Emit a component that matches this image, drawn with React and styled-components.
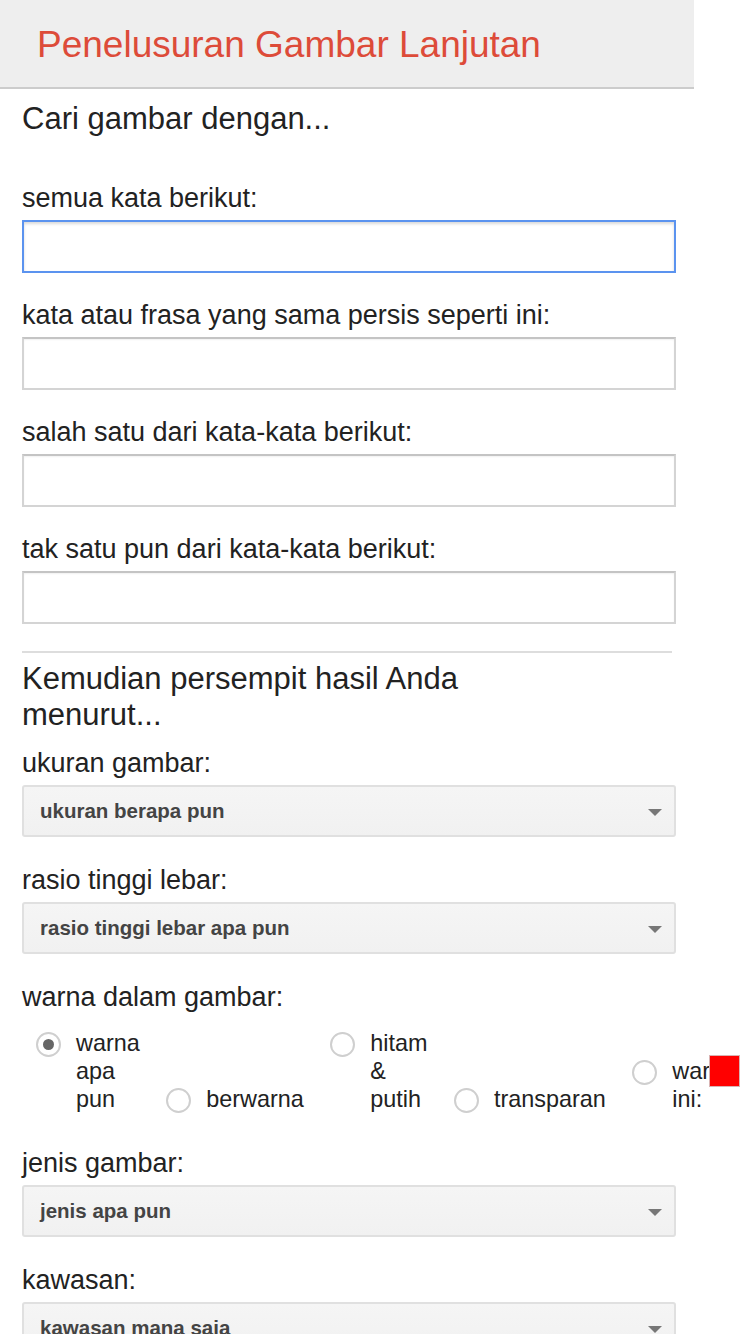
import React from "react";
import styled, { createGlobalStyle } from "styled-components";

const GlobalStyle = createGlobalStyle`
  html, body { margin: 0; padding: 0; background: #fff; }
  body { font-family: "Liberation Sans", Arial, sans-serif; color: #222; }
`;

const Page = styled.div`
  width: 694px;
`;

const Header = styled.header`
  box-sizing: border-box;
  height: 89px;
  padding: 23px 0 0 37px;
  background: #eeeeee;
  border-bottom: 2px solid #cccccc;
`;

const Title = styled.h1`
  margin: 0;
  font-size: 37px;
  line-height: 44px;
  font-weight: normal;
  color: #dd4b39;
`;

const Content = styled.main`
  padding: 12px 18px 0 22px;
`;

const SectionHeading = styled.h2`
  margin: 0 0 ${(p) => p.$after}px;
  max-width: ${(p) => p.$maxWidth || "none"};
  font-size: 31px;
  line-height: 36px;
  font-weight: normal;
  color: #222;
`;

const Field = styled.div`
  margin-bottom: ${(p) => p.$after ?? 27}px;
`;

const Label = styled.div`
  font-size: 27px;
  line-height: 31px;
  color: #222;
  margin-bottom: 6px;
`;

const TextInput = styled.div`
  box-sizing: border-box;
  height: 53px;
  width: 654px;
  background: #fff;
  border: 2px solid ${(p) => (p.$focused ? "#5b93ef" : "#d4d4d4")};
  border-top-color: ${(p) => (p.$focused ? "#5b93ef" : "#c4c4c4")};
  box-shadow: ${(p) =>
    p.$focused ? "inset 0 2px 3px rgba(0,0,0,0.15)" : "inset 0 1px 2px rgba(0,0,0,0.06)"};
`;

const Divider = styled.hr`
  margin: 2px 4px 8px 0;
  border: none;
  height: 2px;
  background: #dddddd;
`;

const Select = styled.div`
  box-sizing: border-box;
  height: 52px;
  width: 654px;
  display: flex;
  align-items: center;
  justify-content: space-between;
  padding: 0 12px 0 16px;
  background: linear-gradient(#f5f5f5, #f1f1f1);
  border: 2px solid #e0e0e0;
  border-radius: 3px;
  font-size: 20.5px;
  font-weight: bold;
  color: #444;
`;

const Caret = styled.span`
  width: 0;
  height: 0;
  border-left: 7px solid transparent;
  border-right: 7px solid transparent;
  border-top: 7px solid #777;
  margin-top: 2px;
`;

const RadioRow = styled.div`
  display: flex;
  align-items: flex-end;
  gap: 26.5px;
  margin-top: 16px;
  padding-left: 14px;
`;

const Option = styled.label`
  flex-shrink: 0;
  display: flex;
  align-items: flex-start;
  gap: 15px;
`;

const Radio = styled.span`
  box-sizing: border-box;
  flex-shrink: 0;
  width: 25px;
  height: 25px;
  margin-top: 3px;
  border-radius: 50%;
  border: 2px solid #cfcfcf;
  background: #fff;
  display: flex;
  align-items: center;
  justify-content: center;
  &::after {
    content: "";
    display: ${(p) => (p.$checked ? "block" : "none")};
    width: 11px;
    height: 11px;
    border-radius: 50%;
    background: #666;
  }
`;

const OptionText = styled.span`
  position: relative;
  width: min-content;
  font-size: 23.4px;
  line-height: 28px;
  color: #222;
`;

const Swatch = styled.span`
  position: absolute;
  left: 37px;
  top: -2px;
  width: 31px;
  height: 32px;
  box-sizing: border-box;
  background: #ff0000;
  border: 1px solid #d9b3b3;
`;

const colorOptions = [
  { text: "warna apa pun", checked: true },
  { text: "berwarna" },
  { text: "hitam & putih" },
  { text: "transparan" },
  { text: "warna ini:", swatch: true },
];

function SelectBox({ value }) {
  return (
    <Select>
      <span>{value}</span>
      <Caret />
    </Select>
  );
}

export default function App() {
  return (
    <>
      <GlobalStyle />
      <Page>
        <Header>
          <Title>Penelusuran Gambar Lanjutan</Title>
        </Header>
        <Content>
          <SectionHeading $after={46}>Cari gambar dengan...</SectionHeading>
          <Field>
            <Label>semua kata berikut:</Label>
            <TextInput $focused />
          </Field>
          <Field>
            <Label>kata atau frasa yang sama persis seperti ini:</Label>
            <TextInput />
          </Field>
          <Field>
            <Label>salah satu dari kata-kata berikut:</Label>
            <TextInput />
          </Field>
          <Field>
            <Label>tak satu pun dari kata-kata berikut:</Label>
            <TextInput />
          </Field>
          <Divider />
          <SectionHeading $after={15} $maxWidth="470px">
            Kemudian persempit hasil Anda menurut...
          </SectionHeading>
          <Field $after={28}>
            <Label>ukuran gambar:</Label>
            <SelectBox value="ukuran berapa pun" />
          </Field>
          <Field $after={28}>
            <Label>rasio tinggi lebar:</Label>
            <SelectBox value="rasio tinggi lebar apa pun" />
          </Field>
          <Field $after={35}>
            <Label>warna dalam gambar:</Label>
            <RadioRow>
              {colorOptions.map((o) => (
                <Option key={o.text}>
                  <Radio $checked={o.checked} />
                  <OptionText>
                    {o.text}
                    {o.swatch && <Swatch />}
                  </OptionText>
                </Option>
              ))}
            </RadioRow>
          </Field>
          <Field $after={28}>
            <Label>jenis gambar:</Label>
            <SelectBox value="jenis apa pun" />
          </Field>
          <Field $after={28}>
            <Label>kawasan:</Label>
            <SelectBox value="kawasan mana saja" />
          </Field>
        </Content>
      </Page>
    </>
  );
}
